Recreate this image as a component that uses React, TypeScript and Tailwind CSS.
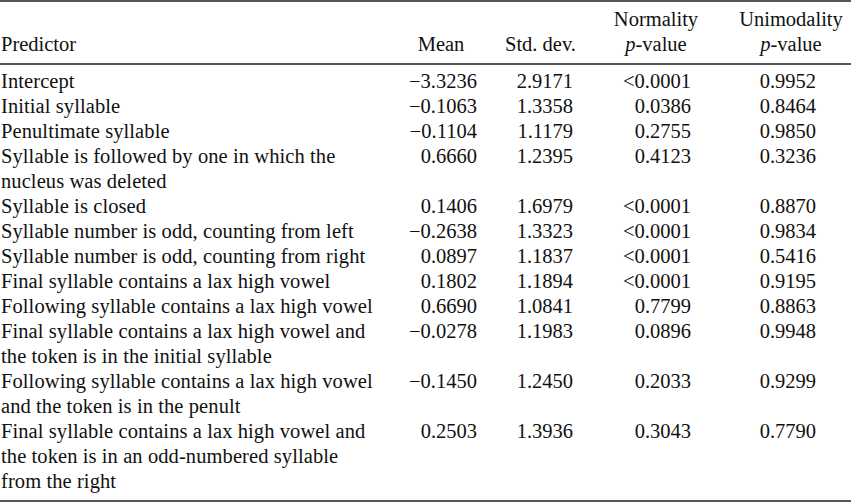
import React from "react";

type Row = { label: React.ReactNode; mean: string; sd: string; norm: string; uni: string };

const rows: Row[] = [
  { label: "Intercept", mean: "\u22123.3236", sd: "2.9171", norm: "<0.0001", uni: "0.9952" },
  { label: "Initial syllable", mean: "\u22120.1063", sd: "1.3358", norm: "0.0386", uni: "0.8464" },
  { label: "Penultimate syllable", mean: "\u22120.1104", sd: "1.1179", norm: "0.2755", uni: "0.9850" },
  {
    label: (
      <>
        Syllable is followed by one in which the
        <br />
        nucleus was deleted
      </>
    ),
    mean: "0.6660",
    sd: "1.2395",
    norm: "0.4123",
    uni: "0.3236",
  },
  { label: "Syllable is closed", mean: "0.1406", sd: "1.6979", norm: "<0.0001", uni: "0.8870" },
  { label: "Syllable number is odd, counting from left", mean: "\u22120.2638", sd: "1.3323", norm: "<0.0001", uni: "0.9834" },
  { label: "Syllable number is odd, counting from right", mean: "0.0897", sd: "1.1837", norm: "<0.0001", uni: "0.5416" },
  { label: "Final syllable contains a lax high vowel", mean: "0.1802", sd: "1.1894", norm: "<0.0001", uni: "0.9195" },
  { label: "Following syllable contains a lax high vowel", mean: "0.6690", sd: "1.0841", norm: "0.7799", uni: "0.8863" },
  {
    label: (
      <>
        Final syllable contains a lax high vowel and
        <br />
        the token is in the initial syllable
      </>
    ),
    mean: "\u22120.0278",
    sd: "1.1983",
    norm: "0.0896",
    uni: "0.9948",
  },
  {
    label: (
      <>
        Following syllable contains a lax high vowel
        <br />
        and the token is in the penult
      </>
    ),
    mean: "\u22120.1450",
    sd: "1.2450",
    norm: "0.2033",
    uni: "0.9299",
  },
  {
    label: (
      <>
        Final syllable contains a lax high vowel and
        <br />
        the token is in an odd-numbered syllable
        <br />
        from the right
      </>
    ),
    mean: "0.2503",
    sd: "1.3936",
    norm: "0.3043",
    uni: "0.7790",
  },
];

export default function App() {
  return (
    <div
      className="w-[851px] h-[503px] bg-white text-[#111] text-[20.5px] leading-[25px] overflow-hidden"
      style={{ fontFamily: '"Liberation Serif", "Times New Roman", serif' }}
    >
      <div className="h-[2px] bg-[#555]" />
      <div className="flex items-end pt-[5px] pb-[6px]">
        <div className="w-[401px] shrink-0 pl-px">Predictor</div>
        <div className="w-[80px] shrink-0 text-center">Mean</div>
        <div className="w-[101px] shrink-0 ml-[9px] text-center">Std. dev.</div>
        <div className="w-[112px] shrink-0 ml-[9px] text-center">
          Normality
          <br />
          <span className="italic">p</span>-value
        </div>
        <div className="w-[120px] shrink-0 ml-[19px] text-center">
          Unimodality
          <br />
          <span className="italic">p</span>-value
        </div>
      </div>
      <div className="h-[2px] bg-[#555]" />
      <div className="pt-[4px] pb-[6px]">
        {rows.map((r, i) => (
          <div key={i} className="grid grid-cols-[387px_90px_96px_118px_125px] items-start">
            <div className="pl-px whitespace-nowrap tracking-[0.09px]">{r.label}</div>
            <div className="text-right">{r.mean}</div>
            <div className="text-right">{r.sd}</div>
            <div className="text-right">{r.norm}</div>
            <div className="text-right">{r.uni}</div>
          </div>
        ))}
      </div>
      <div className="h-[2px] bg-[#555]" />
    </div>
  );
}
